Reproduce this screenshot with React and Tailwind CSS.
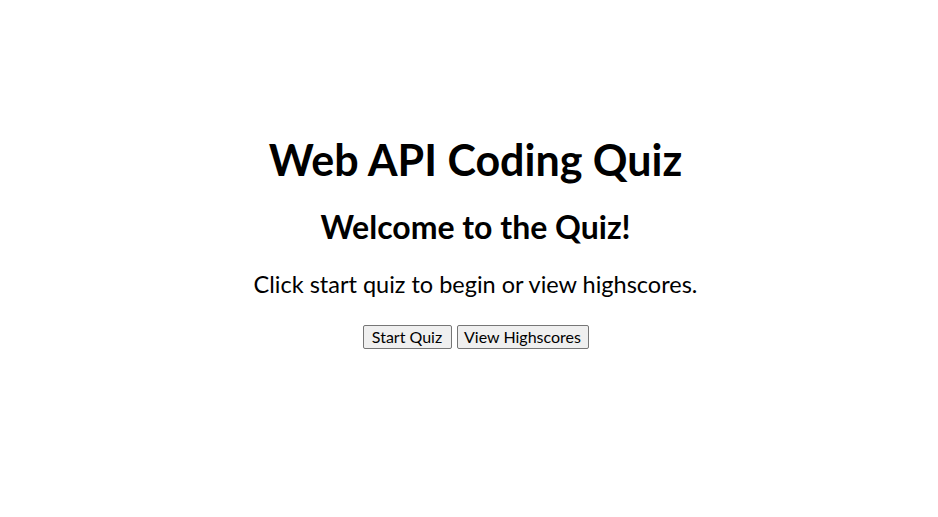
import React from 'react';

const App = () => {
  return (
    <div className="min-h-screen bg-white text-black text-center font-['Lato','Open_Sans',sans-serif] pt-[132px] pl-[13px]">
      <h1 className="text-[43px] font-bold leading-[56px]">Web API Coding Quiz</h1>
      <h2 className="mt-[18px] text-[32px] font-bold leading-[42px]">Welcome to the Quiz!</h2>
      <p className="mt-[21px] text-[23.5px] leading-[30px]">Click start quiz to begin or view highscores.</p>
      <div className="mt-[26px] flex justify-center gap-[5px]">
        <button className="h-[24px] w-[89px] text-[16px] leading-[20px] bg-[#efefef] border border-[#767676] rounded-[2px]">
          Start Quiz
        </button>
        <button className="h-[24px] w-[132px] text-[16px] leading-[20px] bg-[#efefef] border border-[#767676] rounded-[2px]">
          View Highscores
        </button>
      </div>
    </div>
  );
};

export default App;
